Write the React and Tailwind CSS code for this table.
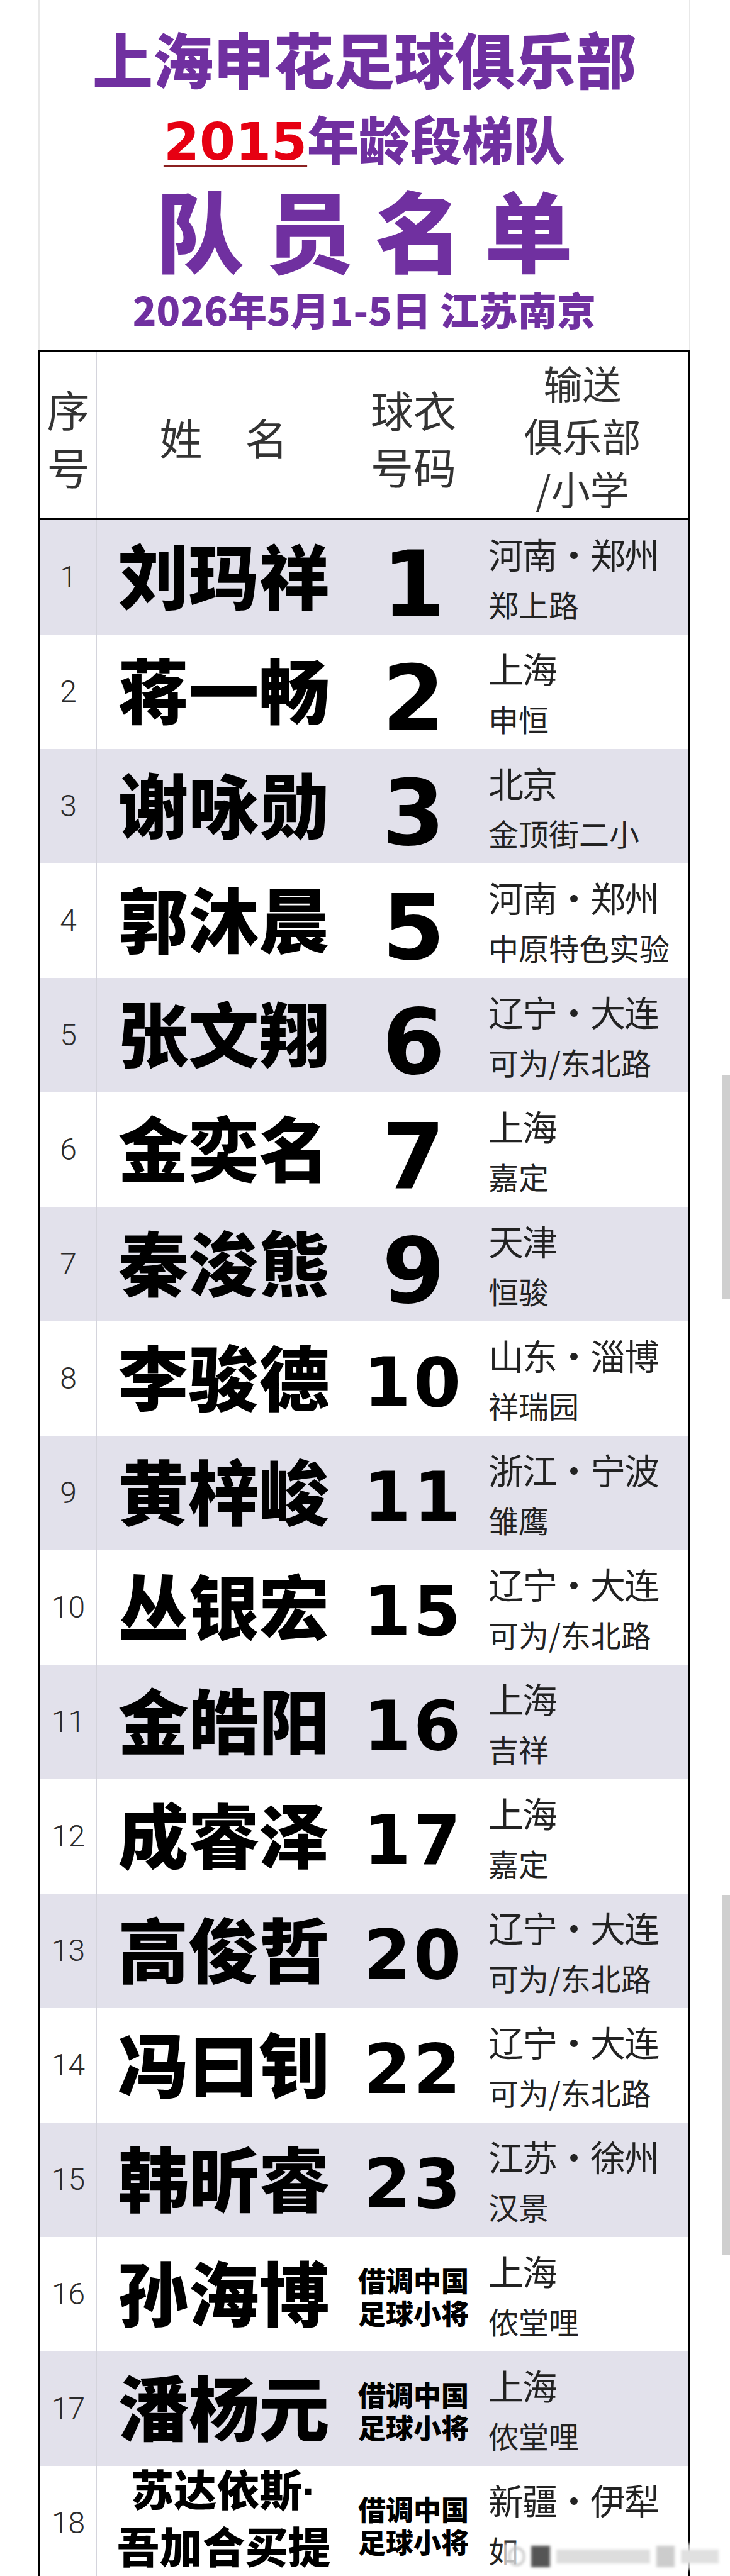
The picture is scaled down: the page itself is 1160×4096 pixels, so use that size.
import React from 'react';

const CJK = "font-['Noto_Sans_CJK_SC',sans-serif]";

const ROWS = [
  { n: 1, name: '刘玛祥', no: '1', a: '河南·郑州', b: '郑上路' },
  { n: 2, name: '蒋一畅', no: '2', a: '上海', b: '申恒' },
  { n: 3, name: '谢咏勋', no: '3', a: '北京', b: '金顶街二小' },
  { n: 4, name: '郭沐晨', no: '5', a: '河南·郑州', b: '中原特色实验' },
  { n: 5, name: '张文翔', no: '6', a: '辽宁·大连', b: '可为/东北路' },
  { n: 6, name: '金奕名', no: '7', a: '上海', b: '嘉定' },
  { n: 7, name: '秦浚熊', no: '9', a: '天津', b: '恒骏' },
  { n: 8, name: '李骏德', no: '10', a: '山东·淄博', b: '祥瑞园' },
  { n: 9, name: '黄梓峻', no: '11', a: '浙江·宁波', b: '雏鹰' },
  { n: 10, name: '丛银宏', no: '15', a: '辽宁·大连', b: '可为/东北路' },
  { n: 11, name: '金皓阳', no: '16', a: '上海', b: '吉祥' },
  { n: 12, name: '成睿泽', no: '17', a: '上海', b: '嘉定' },
  { n: 13, name: '高俊哲', no: '20', a: '辽宁·大连', b: '可为/东北路' },
  { n: 14, name: '冯曰钊', no: '22', a: '辽宁·大连', b: '可为/东北路' },
  { n: 15, name: '韩昕睿', no: '23', a: '江苏·徐州', b: '汉景' },
  { n: 16, name: '孙海博', no: null, a: '上海', b: '侬堂哩' },
  { n: 17, name: '潘杨元', no: null, a: '上海', b: '侬堂哩' },
  { n: 18, name: ['苏达依斯', '吾加合买提'], no: null, a: '新疆·伊犁', b: '如' },
];

function Row({ r, i }) {
  const gray = i % 2 === 0;
  return (
    <div className={`grid grid-cols-[89px_404px_199px_1fr] h-[182px] ${gray ? 'bg-[#e2e1eb]' : 'bg-white'}`}>
      <div className="flex items-center justify-center font-['Roboto',sans-serif] font-light text-[48px] leading-none text-[#2b2b2b]">
        {r.n}
      </div>

      {/* 姓名 */}
      {Array.isArray(r.name) ? (
        <div className={`flex items-start justify-center border-l border-[#d4d4dc] ${CJK} font-black text-[68px] leading-[86px] text-black`}>
          <div className="-mt-[8px] text-center whitespace-nowrap">
            {r.name[0]}
            <span className="font-['Liberation_Sans',sans-serif] font-bold">·</span>
            <br />
            {r.name[1]}
          </div>
        </div>
      ) : (
        <div className={`flex items-center justify-center pb-[12px] border-l border-[#d4d4dc] ${CJK} font-black text-[112px] leading-none text-black whitespace-nowrap`}>
          {r.name}
        </div>
      )}

      {/* 球衣号码 */}
      {r.no === null ? (
        <div className={`flex items-center justify-center pt-[6px] border-l border-[#d4d4dc] ${CJK} font-black text-[44px] leading-[52px] text-black`}>
          <div className="text-center whitespace-nowrap">
            借调中国
            <br />
            足球小将
          </div>
        </div>
      ) : r.no.length === 1 ? (
        <div className="flex items-center justify-center pt-[22px] border-l border-[#d4d4dc] font-['DejaVu_Sans',sans-serif] font-bold text-[144px] leading-none text-black">
          {r.no}
        </div>
      ) : (
        <div className="flex items-center justify-center pt-[14px] border-l border-[#d4d4dc] font-['DejaVu_Sans',sans-serif] font-bold text-[108px] leading-none tracking-[4px] text-black">
          {r.no}
        </div>
      )}

      {/* 输送俱乐部 */}
      <div className={`flex items-center pl-[19px] border-l border-[#d4d4dc] ${CJK} text-[#222]`}>
        <div className="whitespace-nowrap">
          <div className="text-[56px] leading-[84px] tracking-[-2px]">{r.a}</div>
          <div className="text-[48px] leading-[76px]">{r.b}</div>
        </div>
      </div>
    </div>
  );
}

export default function App() {
  return (
    <div className="relative w-[1160px] h-[4096px] overflow-hidden bg-white">
      <div className="ml-[61px] w-[1036px]">
        {/* 标题 */}
        <div className={`border-x-2 border-[#e8e8e8] pt-[37px] pb-[7px] text-center text-[#7030a0] ${CJK} font-black`}>
          <div className="text-[96px] leading-[110px] whitespace-nowrap">上海申花足球俱乐部</div>
          <div className="flex items-baseline justify-center h-[144px] leading-[144px] text-[82px] whitespace-nowrap">
            <span className="font-['DejaVu_Sans',sans-serif] font-bold text-[#e60012] underline decoration-[3px] decoration-[#8b2020] underline-offset-[8px]">
              2015
            </span>
            <span>年龄段梯队</span>
          </div>
          <div className="flex justify-center gap-[34px] text-[140px] leading-[142px]">
            <span>队</span>
            <span>员</span>
            <span>名</span>
            <span>单</span>
          </div>
          <div className="text-[62px] leading-[116px] whitespace-nowrap">2026年5月1-5日 江苏南京</div>
        </div>

        {/* 表格 */}
        <div className="border-[3px] border-black">
          <div className={`grid grid-cols-[89px_404px_199px_1fr] h-[268px] border-b-[3px] border-black bg-white ${CJK} text-[#333]`}>
            <div className="flex items-center justify-center pt-[8px] text-[68px] leading-[92px]">
              <div className="text-center">
                序
                <br />
                号
              </div>
            </div>
            <div className="flex items-center justify-center pt-[6px] border-l border-[#d4d4dc] text-[68px] leading-[92px] whitespace-pre">
              姓　名
            </div>
            <div className="flex items-center justify-center pt-[8px] border-l border-[#d4d4dc] text-[68px] leading-[90px]">
              <div className="text-center">
                球衣
                <br />
                号码
              </div>
            </div>
            <div className="flex items-center justify-center border-l border-[#d4d4dc] text-[62px] leading-[84px]">
              <div className="text-center">
                输送
                <br />
                俱乐部
                <br />
                /小学
              </div>
            </div>
          </div>

          {ROWS.map((r, i) => (
            <Row key={r.n} r={r} i={i} />
          ))}
        </div>
      </div>

      {/* 右侧滚动条痕迹 */}
      <div className="absolute right-0 top-[1710px] w-[12px] h-[355px] bg-[#cfcfcf]" />
      <div className="absolute right-0 top-[3013px] w-[12px] h-[572px] bg-[#cfcfcf]" />

      {/* 水印 */}
      <div className="absolute left-[800px] top-[4044px] w-[350px] h-[42px] bg-white/70 blur-[2px] flex items-center gap-[10px] px-[8px]">
        <div className="w-[26px] h-[30px] rounded-full border-[3px] border-[#bbb]" />
        <div className="w-[30px] h-[34px] bg-[#555]" />
        <div className="w-[150px] h-[22px] bg-[#ddd]" />
        <div className="w-[30px] h-[34px] bg-[#ccc]" />
        <div className="w-[60px] h-[22px] bg-[#e0e0e0]" />
      </div>
    </div>
  );
}
